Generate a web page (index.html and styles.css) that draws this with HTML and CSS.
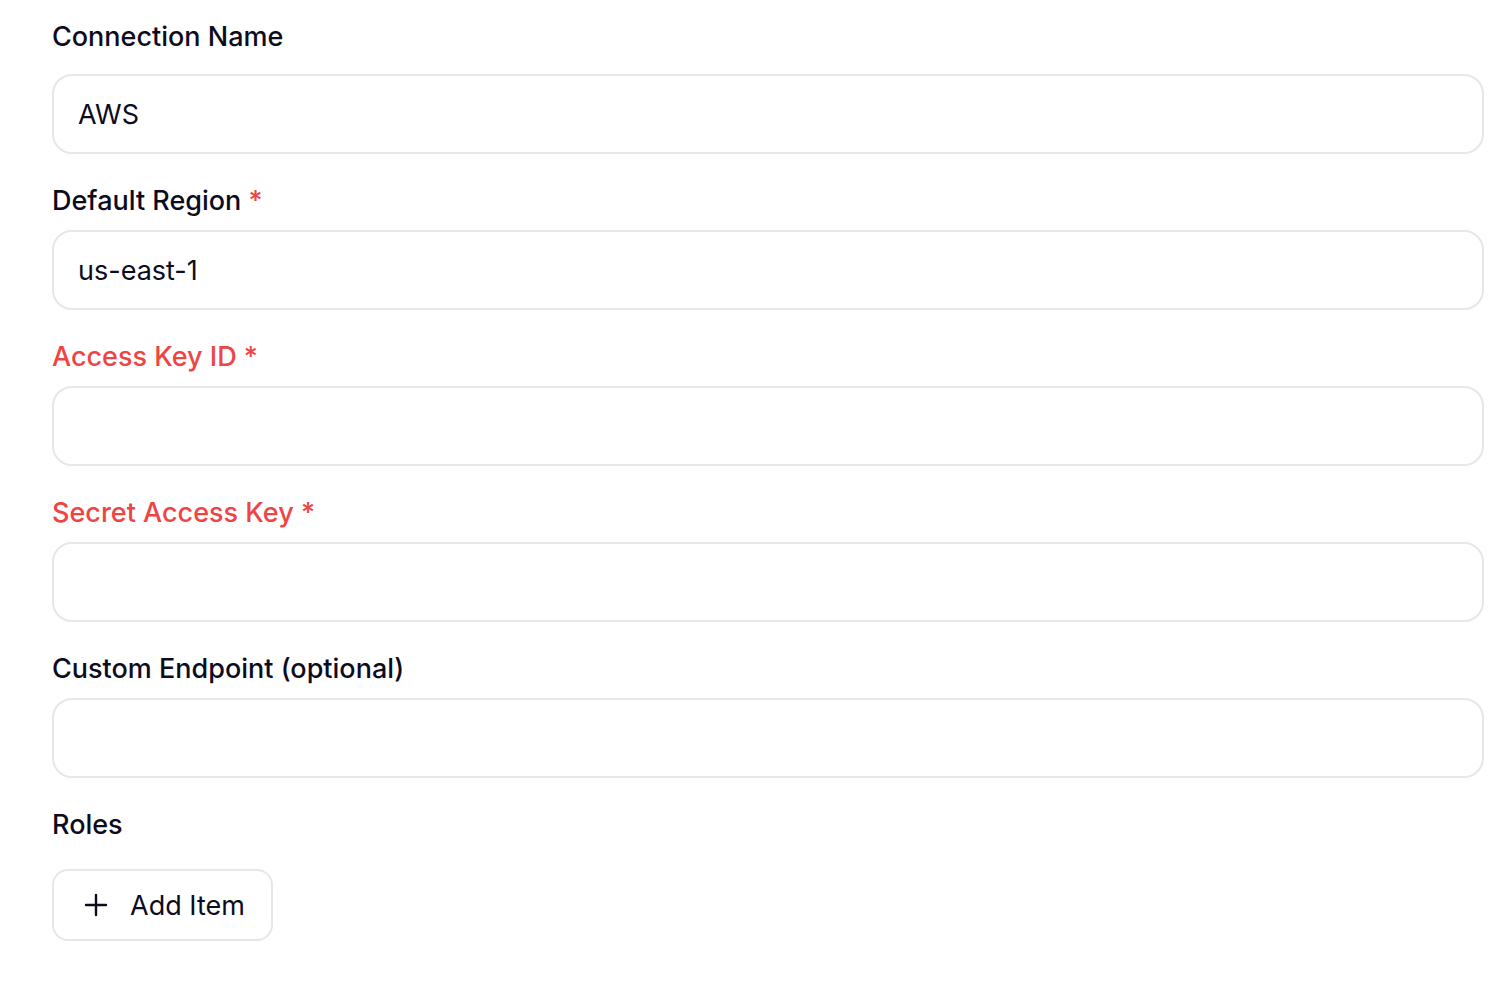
FILE: index.html
```html
<!DOCTYPE html>
<html lang="en">
<head>
<meta charset="utf-8">
<title>AWS Connection</title>
<link rel="stylesheet" href="styles.css">
</head>
<body>
<form class="form">
  <div class="field field-first">
    <label class="label">Connection Name</label>
    <div class="input">AWS</div>
  </div>
  <div class="field">
    <label class="label">Default Region <span class="req">*</span></label>
    <div class="input">us-east-1</div>
  </div>
  <div class="field">
    <label class="label label-error">Access Key ID <span class="req">*</span></label>
    <div class="input"></div>
  </div>
  <div class="field">
    <label class="label label-error">Secret Access Key <span class="req">*</span></label>
    <div class="input"></div>
  </div>
  <div class="field">
    <label class="label">Custom Endpoint (optional)</label>
    <div class="input"></div>
  </div>
  <div class="field field-roles">
    <label class="label">Roles</label>
    <button type="button" class="add-btn">
      <svg class="plus" width="24" height="24" viewBox="0 0 24 24" fill="none" stroke="currentColor" stroke-width="2.4" stroke-linecap="round"><path d="M12 2v20M2 12h20"/></svg>
      <span>Add Item</span>
    </button>
  </div>
</form>
</body>
</html>
```

FILE: styles.css
```css
* { box-sizing: border-box; }
html, body { margin: 0; padding: 0; background: #ffffff; }
body {
  font-family: "Inter", "Noto Sans", "Liberation Sans", sans-serif;
  color: #0c0c1d;
}
.form {
  display: flex;
  flex-direction: column;
  padding: 19px 22px 0 52px;
}
.field {
  display: flex;
  flex-direction: column;
  margin-bottom: 29px;
}
.label {
  font-size: 27px;
  line-height: 36px;
  font-weight: 500;
  margin-bottom: 11px;
  color: #0c0c1d;
}
.field-first .label { margin-bottom: 19px; }
.field-roles .label { margin-bottom: 26px; }
.field-roles { margin-bottom: 0; align-items: flex-start; }
.label-error { color: #ef4444; }
.req { color: #ef4444; }
.input {
  height: 80px;
  border: 2px solid #e6e6eb;
  border-radius: 20px;
  padding: 0 24px;
  display: flex;
  align-items: center;
  font-size: 27px;
  color: #0c0c1d;
  background: #fff;
}
.add-btn {
  display: flex;
  align-items: center;
  gap: 22px;
  height: 72px;
  padding: 0 26px 0 30px;
  border: 2px solid #e6e6eb;
  border-radius: 16px;
  background: #fff;
  font-family: inherit;
  font-size: 27px;
  color: #0c0c1d;
  cursor: pointer;
}
.plus { flex: none; }
```
